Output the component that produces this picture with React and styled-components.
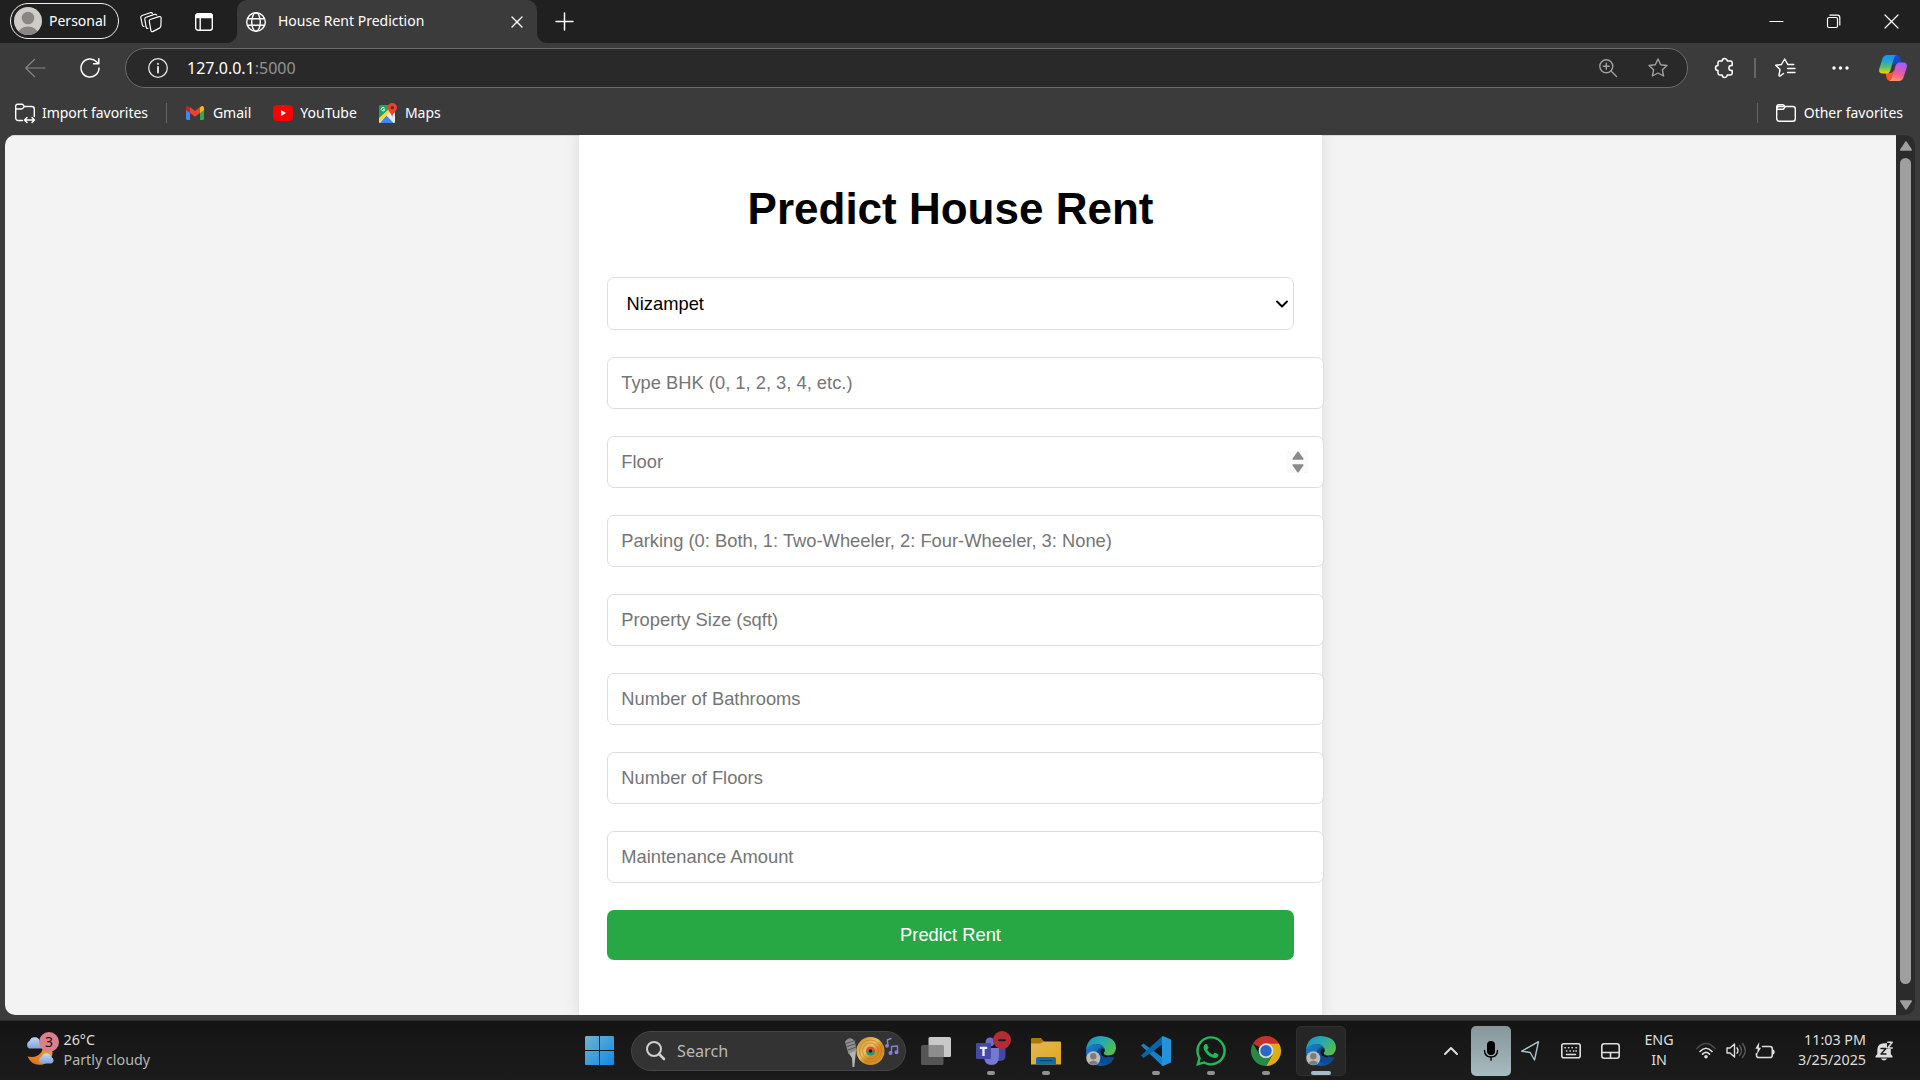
import React from "react";
import styled, { createGlobalStyle } from "styled-components";
import { FaWhatsapp } from "react-icons/fa";

const GlobalStyle = createGlobalStyle`
  *, *::before, *::after { box-sizing: border-box; }
  html, body { margin: 0; padding: 0; overflow: hidden; background: #3b3b3b; }
`;

const uiFont = `"Noto Sans", "Open Sans", sans-serif`;
const pageFont = `"Liberation Sans", Arial, sans-serif`;

/* ---------- shared ---------- */

const Screen = styled.div`
  width: 1920px;
  height: 1080px;
  display: flex;
  flex-direction: column;
  overflow: hidden;
  background: #3b3b3b;
  font-family: ${uiFont};
  color: #fff;
`;

const Svg = styled.svg`
  display: block;
  flex: none;
  overflow: visible;
  fill: none;
  stroke: ${(p) => p.$c || "#fff"};
  stroke-width: ${(p) => p.$w || 1.4};
  stroke-linecap: round;
  stroke-linejoin: round;
`;

const Icon = ({ w = 20, h, c, sw, children }) => (
  <Svg width={w} height={h || w} viewBox={`0 0 ${w} ${h || w}`} $c={c} $w={sw}>
    {children}
  </Svg>
);

const Slot = styled.div`
  flex: none;
  width: ${(p) => p.$w}px;
  padding-left: ${(p) => p.$pl || 0}px;
  padding-right: ${(p) => p.$pr || 0}px;
  display: flex;
  align-items: center;
  justify-content: center;
`;

const Label = styled.span`
  flex: none;
  white-space: nowrap;
  font-size: ${(p) => p.$size || 14}px;
  line-height: 20px;
  letter-spacing: ${(p) => p.$ls || 0}px;
  color: ${(p) => p.$c || "#fff"};
`;

const Grow = styled.div`
  flex: 1;
`;

const Divider = styled.div`
  flex: none;
  width: ${(p) => p.$w || 1}px;
  height: 20px;
  background: #666;
`;

/* ---------- tab strip ---------- */

const TabStrip = styled.div`
  flex: none;
  height: 43px;
  display: flex;
  align-items: stretch;
  background: #202020;
`;

const ProfilePill = styled.div`
  align-self: flex-start;
  display: flex;
  align-items: center;
  gap: 7px;
  width: 109px;
  height: 36px;
  margin: 3px 0 0 10px;
  padding-left: 3px;
  border: 1.5px solid #f0f0f0;
  border-radius: 18px;
`;

const Tab = styled.div`
  position: relative;
  width: 300px;
  margin-left: 12px;
  display: flex;
  align-items: center;
  padding: 0 15px 0 9px;
  background: #3b3b3b;
  border-radius: 10px 10px 0 0;
  &::before, &::after {
    content: "";
    position: absolute;
    bottom: 0;
    width: 10px;
    height: 10px;
  }
  &::before {
    left: -10px;
    background: radial-gradient(circle at 0 0, #202020 9.5px, #3b3b3b 10.5px);
  }
  &::after {
    right: -10px;
    background: radial-gradient(circle at 100% 0, #202020 9.5px, #3b3b3b 10.5px);
  }
`;

const TabTitle = styled(Label)`
  margin: 0 0 2px 12px;
`;

/* ---------- toolbar ---------- */

const Toolbar = styled.div`
  flex: none;
  height: 48px;
  display: flex;
  align-items: center;
  padding: 2px 0 0 7px;
`;

const AddressBar = styled.div`
  flex: none;
  display: flex;
  align-items: center;
  width: 1563px;
  height: 40px;
  margin-left: 8px;
  padding-left: 12px;
  background: #292929;
  border: 1px solid #6b6b6b;
  border-radius: 20px;
`;

const Url = styled(Label)`
  margin-left: 9px;
`;

const Favorites = styled.div`
  flex: none;
  height: 44px;
  display: flex;
  align-items: center;
  padding: 0 17px 0 15px;
`;

const Favorite = styled.div`
  display: flex;
  align-items: center;
  gap: ${(p) => p.$gap || 8}px;
  margin-left: ${(p) => p.$ml || 0}px;
`;

/* ---------- web page ---------- */

const Viewport = styled.div`
  flex: none;
  display: flex;
  width: 1910px;
  height: 880px;
  margin-left: 5px;
  border-radius: 10px;
  overflow: hidden;
  background: #2b2b2b;
`;

const Page = styled.div`
  width: 1891px;
  height: 880px;
  overflow: hidden;
  background: #f3f3f3;
  box-shadow: inset 0 1px 0 #dadada;
  font-family: ${pageFont};
`;

const Card = styled.main`
  width: 743px;
  height: 895px;
  margin: -8px 0 0 574px;
  padding: 27.5px 28px;
  background: #fff;
  border-radius: 11px;
  box-shadow: 0 0 16px rgba(0, 0, 0, 0.1);
`;

const Heading = styled.h1`
  margin: 29px 0 41.5px;
  height: 52px;
  line-height: 50px;
  font-size: 44px;
  font-weight: 700;
  color: #000;
  text-align: center;
`;

const Form = styled.form`
  display: flex;
  flex-direction: column;
  gap: 27px;
  font-size: 18.33px;
`;

const SelectBox = styled.label`
  display: flex;
  align-items: center;
  width: 687px;
  height: 53px;
  padding: 0 5px 0 18.5px;
  background: #fff;
  border: 1px solid #ddd;
  border-radius: 7px;
`;

const Select = styled.select`
  flex: 1;
  height: 30px;
  padding: 0;
  appearance: none;
  background: transparent;
  border: 0;
  font: inherit;
  color: #000;
`;

const Field = styled.label`
  display: flex;
  align-items: center;
  width: 717px;
  height: 52px;
  padding: 0 15px 0 13.25px;
  background: #fff;
  border: 1px solid #ddd;
  border-radius: 7px;
`;

const Input = styled.input`
  flex: 1;
  height: 26px;
  padding: 0;
  border: 0;
  outline: 0;
  background: transparent;
  font: inherit;
  &::placeholder { color: #757575; }
`;

const Stepper = styled.span`
  display: flex;
  align-items: center;
  justify-content: center;
  width: 21px;
  height: 22px;
  background: #fafafa;
`;

const Submit = styled.button`
  width: 687px;
  height: 50px;
  padding: 0;
  border: 0;
  border-radius: 7px;
  background: #28a745;
  font: inherit;
  color: #fff;
`;

const ScrollTrack = styled.div`
  width: 19px;
  display: flex;
  flex-direction: column;
  align-items: center;
  padding-top: 6px;
`;

const ScrollThumb = styled.div`
  flex: none;
  width: 11px;
  height: 826px;
  margin: 7px 0 16px;
  border-radius: 5.5px;
  background: #9f9f9f;
`;

/* ---------- taskbar ---------- */

const Taskbar = styled.div`
  flex: none;
  height: 60px;
  margin-top: 5px;
  display: flex;
  align-items: center;
  border-top: 1px solid #2c2c2c;
  background: linear-gradient(#151515, #1b1b1b);
`;

const Weather = styled.div`
  flex: none;
  display: flex;
  align-items: center;
  width: 585px;
  padding-left: 23.5px;
`;

const TextPair = styled.div`
  display: flex;
  flex-direction: column;
  align-items: ${(p) => p.$align || "flex-start"};
  margin-bottom: 2px;
`;

const SearchBox = styled.div`
  flex: none;
  display: flex;
  align-items: center;
  width: 275px;
  height: 40px;
  margin: 0 2.5px 0 17px;
  padding: 0 5px 0 14px;
  background: #333;
  border: 1px solid #454545;
  border-radius: 20px;
`;

const SearchLabel = styled(Label)`
  margin-left: 12px;
`;

const AppButton = styled.div`
  flex: none;
  display: flex;
  flex-direction: column;
  align-items: center;
  width: 50px;
  height: 50px;
  margin: 0 2.5px;
  padding-top: ${(p) => (p.$active ? 9 : 10)}px;
  gap: 5px;
  border-radius: 5px;
  ${(p) => p.$active && "background:#262626;border:1px solid #2f2f2f;"}
`;

const RunMark = styled.div`
  width: ${(p) => (p.$active ? 20 : 8)}px;
  height: 4px;
  border-radius: 2px;
  background: ${(p) => (p.$active ? "#a4bcc3" : "#929292")};
`;

const WhatsApp = styled(FaWhatsapp)`
  flex: none;
  margin: -2px;
  color: #20b858;
`;

const MicTile = styled.div`
  flex: none;
  display: flex;
  align-items: center;
  justify-content: center;
  width: 40px;
  height: 50px;
  border-radius: 5px;
  background: linear-gradient(#879699, #a7bbc0);
`;

const Clock = styled.div`
  flex: none;
  width: 84px;
  display: flex;
  flex-direction: column;
  align-items: flex-end;
  margin-bottom: 2px;
`;

/* ---------- drawings ---------- */

const Avatar = () => (
  <Icon w={28}>
    <defs>
      <clipPath id="av"><circle cx="14" cy="14" r="14" /></clipPath>
    </defs>
    <g clipPath="url(#av)" stroke="none">
      <rect width="28" height="28" fill="#cfccc8" />
      <circle cx="14" cy="11" r="6.3" fill="#8a8683" />
      <ellipse cx="14" cy="27" rx="10" ry="7.5" fill="#8a8683" />
    </g>
  </Icon>
);

const Workspaces = () => (
  <Icon w={22} h={20} sw={1.2}>
    <path d="M10.800 7.300 19 4.600q2-.5 2.100 1.400l-.2 7.500q0 1.800-1.500 2.600l-6.200 3.300q-1.900.9-2.300-1L9.300 9.400q-.2-1.500 1.500-2.100z" />
    <path d="M8 16.500q-1.500.1-1.900-1.500L4.800 7.400q-.2-1.500 1.300-2.100l8.400-2.900q1.400-.4 2.200.6" />
    <path d="M4 14.500q-1.300 0-1.700-1.500L.8 5.700q-.3-1.500 1.200-2.200L10.300.7q1.400-.4 2.200.6" />
  </Icon>
);

const TabActions = () => (
  <Icon w={18} sw={1.4}>
    <rect x=".7" y=".7" width="16.600" height="16.600" rx="2.500" />
    <path d="M.7 4.500V3.200A2.500 2.500 0 0 1 3.200.7h11.600a2.500 2.500 0 0 1 2.500 2.500v1.300z" fill="#fff" />
    <path d="M5.200 5v12" />
  </Icon>
);

const Globe = () => (
  <Icon w={20} sw={1.4}>
    <circle cx="10" cy="10" r="9.3" />
    <ellipse cx="10" cy="10" rx="4.3" ry="9.3" />
    <path d="M1.6 6.8h16.8M1.6 13.2h16.8" />
  </Icon>
);

const Cross = ({ s = 10, sw = 1.4 }) => (
  <Icon w={s} sw={sw}><path d={`M0 0 ${s} ${s}M${s} 0 0 ${s}`} /></Icon>
);

const Gmail = () => (
  <Icon w={18} h={14}>
    <g stroke="none">
      <path d="M0 2.5v10.2Q0 14 1.3 14H4V5z" fill="#4285f4" />
      <path d="M18 2.5v10.2q0 1.3-1.3 1.3H14V5z" fill="#34a853" />
      <path d="M14 1.2V7l4-3V2Q17.600-.8 15 .4z" fill="#fbbc04" />
      <path d="M4 1.2V7L0 4V2Q.4-.8 3 .4z" fill="#c5221f" />
      <path d="M4 1.100 9 5l5-3.900V7l-5 3.800L4 7z" fill="#ea4335" />
    </g>
  </Icon>
);

const YouTube = () => (
  <Icon w={20} h={16}>
    <rect width="20" height="16" rx="4" fill="#f00" stroke="none" />
    <path d="M8 5v6l5-3z" fill="#fff" stroke="none" />
  </Icon>
);

const MapsLogo = () => (
  <Icon w={18} h={20}>
    <g stroke="none">
      <rect x="0" y="2" width="16" height="18" rx="1.500" fill="#1fa463" />
      <path d="M0 18.500 12 6l4 4v8.500q0 1.500-1.500 1.500h-13Q0 20 0 18.500z" fill="#e8eaed" />
      <path d="M1 20 7.500 12.500 14.500 20z" fill="#4285f4" />
      <path d="m0 15 11-10 1.500 2.500L.3 19.400Q0 19 0 18.500z" fill="#fdd835" />
      <path d="M13.200 0A4.600 4.600 0 0 1 18 4.600c0 3.200-3.600 4.800-4.800 9.400C12 9.400 8.600 7.800 8.600 4.600A4.600 4.600 0 0 1 13.200 0z" fill="#ea4335" />
      <circle cx="13.300" cy="4.700" r="1.700" fill="#8c1d16" />
    </g>
    <path d="M5.300 5a1.700 1.700 0 1 0 .4 1.700H4.500" stroke="#fff" strokeWidth="1" />
  </Icon>
);

const Folder = ({ arrows }) => (
  <Icon w={20} h={18} sw={1.4}>
    {arrows ? (
      <>
        <path d="M7.500 16.500H3.200A2.500 2.500 0 0 1 .7 14V2.200Q.7.300 2.600.3h4Q8 .3 8.500 1.300L9.300 2.500h7.500a2.500 2.500 0 0 1 2.500 2.500v7.500M.7 5h5.500Q8 5 9.300 2.500" />
        <path d="M9.500 16h10M12 13.500 9.500 16l2.500 2.500M17 13.500l2.500 2.500-2.500 2.500" />
      </>
    ) : (
      <>
        <rect x=".7" y="2.500" width="18.600" height="14.700" rx="2.500" />
        <path d="M.7 5V3Q.7.700 3 .7h3.700q1 0 1.500.8L9 2.800 8 4.500q-.5.700-1.500.7H.8" />
      </>
    )}
  </Icon>
);

const starPath = "m10 1 2.700 5.700 6.300.8-4.600 4.300 1.200 6.200L10 15l-5.600 3 1.200-6.200L1 7.500l6.300-.8z";

const Copilot = () => (
  <Icon w={28} h={26}>
    <defs>
      <linearGradient id="cp1" x1="0" y1="0" x2="0" y2="1">
        <stop offset="0" stopColor="#1597e8" /><stop offset=".35" stopColor="#20a4d8" /><stop offset=".65" stopColor="#5bbf6a" /><stop offset="1" stopColor="#f5d20a" />
      </linearGradient>
      <linearGradient id="cp2" x1=".3" y1="0" x2="0" y2="1">
        <stop offset="0" stopColor="#a95cf0" /><stop offset=".5" stopColor="#ee5a9a" /><stop offset="1" stopColor="#ffa65a" />
      </linearGradient>
    </defs>
    <g stroke="none">
      <path d="M13 0h5q2.200 0 3 2.500L22.500 8h-4q-2.500 0-3.300 2.500L12 5z" fill="#1748c8" />
      <path d="M6.500 18h5q2.200 0 3-2.500l2 5-2.500 5.500h-2.500q-3 0-3.800-3z" fill="#f4582e" />
      <path d="M8.500 0H18q-2.200.2-3 3l-3.700 12.500q-.9 3-4 3H4q-5 0-3.700-5L3.500 3.500Q4.600 0 8.500 0z" fill="url(#cp1)" />
      <path d="M19.500 26H10q2.200-.2 3-3l3.700-12.500q.9-3 4-3H24q5 0 3.700 5l-3.200 10Q23.400 26 19.500 26z" fill="url(#cp2)" />
    </g>
  </Icon>
);

const WeatherIcon = () => (
  <Icon w={40} h={38}>
    <defs>
      <linearGradient id="cl" x1="0" y1="0" x2="0" y2="1"><stop offset="0" stopColor="#c3d8f5" /><stop offset="1" stopColor="#7fa3dc" /></linearGradient>
      <linearGradient id="mo" x1="0" y1="1" x2="1" y2="0"><stop offset="0" stopColor="#e06a1c" /><stop offset="1" stopColor="#f3a726" /></linearGradient>
    </defs>
    <g stroke="none">
      <path d="M3.500 24.500q9.500 2 14-4.500l3.500-8q7 3 7.500 8.500 0 8-8 11.500-12 3.500-17-7.500z" fill="url(#mo)" />
      <path d="M5 16.500a4.500 4.500 0 0 1 .6-7.800A5.500 5.500 0 0 1 16 9.500a4 4 0 0 1 1 7z" fill="url(#cl)" />
      <path d="M17 31.500a3.800 3.800 0 0 1 .5-6.800 5.200 5.200 0 0 1 9.800.2 3.600 3.600 0 0 1 .2 6.600z" fill="url(#cl)" />
      <circle cx="25" cy="10" r="10" fill="#d9808a" />
    </g>
    <text x="25" y="15" textAnchor="middle" fontSize="14" fill="#151515" stroke="none" fontFamily="Noto Sans">3</text>
  </Icon>
);

const StartLogo = () => (
  <Icon w={29}>
    <defs>
      <linearGradient id="win" gradientUnits="userSpaceOnUse" x1="0" y1="0" x2="29" y2="29"><stop offset="0" stopColor="#6fb4cc" /><stop offset="1" stopColor="#0f8ae8" /></linearGradient>
    </defs>
    <path d="M1 0h13v14H0V1zM15 0h13q1 0 1 1v13H15zM0 15h14v14H1q-1 0-1-1zM15 15h14v13q0 1-1 1H15z" fill="url(#win)" stroke="none" />
  </Icon>
);

const MusicArt = () => (
  <Icon w={56} h={34}>
    <defs>
      <linearGradient id="disc" x1="0" y1="0" x2="1" y2="1"><stop offset="0" stopColor="#c98a25" /><stop offset=".42" stopColor="#e8c163" /><stop offset=".6" stopColor="#d28a22" /><stop offset="1" stopColor="#d9992d" /></linearGradient>
    </defs>
    <g stroke="none">
      <path d="M1 8Q5 1.500 10.500 6.500l2.300 10L4.500 20z" fill="#8f8f8f" />
      <path d="m5 19.500 7-3-.7 7-1 9.500H8.500L8 24z" fill="#b5b5b5" />
      <circle cx="26.500" cy="17" r="14" fill="url(#disc)" />
      <path d="M22 17a4.500 4.500 0 0 1 9 0z" fill="#d9503c" />
      <path d="M22 17a4.500 4.500 0 0 0 9 0z" fill="#189a72" />
      <circle cx="26.500" cy="17" r="1.700" fill="#201a12" />
    </g>
    <path d="m2 9.500 9-3M3 12.500l9-3M4 16l8.500-3" stroke="#555" strokeWidth="1" />
    <circle cx="26.500" cy="17" r="8" stroke="#b9761c" strokeWidth=".6" />
    <circle cx="26.500" cy="17" r="11" stroke="#b9761c" strokeWidth=".6" />
    <g stroke="#8580d8" strokeWidth="1.400" fill="#8580d8">
      <path d="M44 11.500 43.300 6l3.700-1.500" fill="none" /><circle cx="43" cy="11.800" r="1.200" />
      <path d="M47.500 19v-6.500l6-.5v6" fill="none" /><circle cx="46.500" cy="19" r="1.300" /><circle cx="52.500" cy="18.200" r="1.300" />
    </g>
  </Icon>
);

const TaskView = () => (
  <Icon w={30}>
    <rect x="7.500" y="1" width="22.500" height="20" rx="1.500" fill="#c9c9c9" stroke="none" />
    <rect x="0" y="9" width="22.500" height="20" rx="1.500" fill="#555" stroke="none" />
    <rect x="7.500" y="9" width="15" height="12" fill="#8d8d8d" stroke="none" />
  </Icon>
);

const Teams = () => (
  <Icon w={30}>
    <g stroke="none">
      <circle cx="14" cy="6" r="4.500" fill="#6a70c8" />
      <path d="M22 12h7.500v7.500q0 5-5 5.500H21z" fill="#4348a5" />
      <path d="M9 12h14v8q0 9-7.500 9T8 20z" fill="#7479d2" />
      <rect x="0" y="7" width="15" height="16" rx="1" fill="#454aa8" />
      <path d="M3.800 10.800h7.400V13H8.700v7H6.300v-7H3.800z" fill="#eee" />
      <circle cx="26" cy="4" r="9" fill="#b52b33" />
      <rect x="22" y="3.200" width="8" height="2" rx="1" fill="#1b1b1b" />
    </g>
  </Icon>
);

const Explorer = () => (
  <Icon w={30}>
    <defs><linearGradient id="ex" x1="0" y1="0" x2="1" y2="1"><stop offset="0" stopColor="#e0b75a" /><stop offset="1" stopColor="#e5a815" /></linearGradient></defs>
    <g stroke="none">
      <path d="M0 3q0-1 1-1h9l3 3.500v4H0z" fill="#ab7706" />
      <path d="M0 7.500h9.500l3-2H29q1 0 1 1v22H0z" fill="url(#ex)" />
      <path d="M5 28.500V23q0-2 2-2h16q2 0 2 2v5.500z" fill="#0b6fb8" />
      <rect x="8.500" y="24" width="13" height="1.200" fill="#07456f" />
    </g>
  </Icon>
);

const Edge = ({ id }) => (
  <Icon w={30}>
    <defs>
      <linearGradient id={id + "a"} x1="0" y1="0" x2="1" y2=".6"><stop offset="0" stopColor="#1f8fc4" /><stop offset=".5" stopColor="#25a8b5" /><stop offset="1" stopColor="#55bd4a" /></linearGradient>
      <linearGradient id={id + "b"} x1="0" y1="0" x2="1" y2="1"><stop offset="0" stopColor="#1b80cc" /><stop offset="1" stopColor="#0b4a94" /></linearGradient>
    </defs>
    <g stroke="none">
      <path d="M0 15Q1.500 8 9 8q8 0 9.500 4.500-3 0-3.500 3.500 0 6 8 7.200 3 .2 5.300-1.200Q24 30 15 30 0 29 0 15z" fill={`url(#${id}b)`} />
      <path d="M10.500 18q.5-6 5.500-7l2 1.500q1 2-.5 4 0 3 3 3.800 4 1 8 1.200Q25 26.500 19.500 28 10.500 27 10.500 18z" fill="#0b4a94" />
      <path d="M16 12.500q3 .5 2.500 2.500-1.500 1.800-.8 3 1.300 1.700 4.800 2-1 1.500-2 1.500-6-1.500-6-5.500 0-2.500 1.500-3.500z" fill="#161616" />
      <path d="M0 14Q1.500 0 15 0 30 1 30 12q-.5 7.500-8 7.500-5-.3-4-3 1.500-1.700.5-4Q16.500 8 10.500 8 3 8 0 14z" fill={`url(#${id}a)`} />
      <circle cx="7.300" cy="22.300" r="7" fill="#bdbbb9" />
      <circle cx="7.300" cy="20.300" r="3.200" fill="#7e7c7a" />
      <path d="M2.500 27q4.800-5 9.600 0-4.800 4-9.600 0z" fill="#7e7c7a" />
    </g>
  </Icon>
);

const VSCode = () => (
  <Icon w={30}>
    <g stroke="none">
      <path d="M0 9.500 2.500 7.500 22 22v7.500L21.500 30z" fill="#1a7fc6" />
      <path d="M0 19.500 2.500 22 22 8V.5L21.500 0z" fill="#0866a8" />
      <path d="M22 0l8 3.500v23L22 30q-1.500-.5-1-2.500V2.500Q20.500.500 22 0z" fill="#2394dc" />
    </g>
  </Icon>
);

const Chrome = () => (
  <Icon w={30}>
    <g stroke="none">
      <path d="M15 15 2 7.500A15 15 0 0 1 28 7.500H15z" fill="#c5322a" />
      <path d="M15 7.500H28A15 15 0 0 1 15 30l6.500-11.200z" fill="#e2ab12" />
      <path d="M15 30A15 15 0 0 1 2 7.500l6.500 11.200 13 .1z" fill="#268a43" />
      <circle cx="15" cy="14.700" r="7.400" fill="#ddd" />
      <circle cx="15" cy="14.700" r="5.700" fill="#2967cc" />
    </g>
  </Icon>
);

const tray = "#dedede";

const fields = [
  "Type BHK (0, 1, 2, 3, 4, etc.)",
  "Floor",
  "Parking (0: Both, 1: Two-Wheeler, 2: Four-Wheeler, 3: None)",
  "Property Size (sqft)",
  "Number of Bathrooms",
  "Number of Floors",
  "Maintenance Amount",
];

const apps = [
  { name: "view", icon: <TaskView /> },
  { name: "teams", icon: <Teams />, run: true },
  { name: "files", icon: <Explorer />, run: true },
  { name: "edge", icon: <Edge id="e1" /> },
  { name: "code", icon: <VSCode />, run: true },
  { name: "whatsapp", icon: <WhatsApp size={34} />, run: true },
  { name: "chrome", icon: <Chrome />, run: true },
  { name: "edge2", icon: <Edge id="e2" />, run: true, active: true },
];

export default function App() {
  return (
    <Screen>
      <GlobalStyle />
      <TabStrip>
        <ProfilePill>
          <Avatar />
          <Label $size={14}>Personal</Label>
        </ProfilePill>
        <Slot $w={64}><Workspaces /></Slot>
        <Slot $w={42}><TabActions /></Slot>
        <Tab>
          <Globe />
          <TabTitle>House Rent Prediction</TabTitle>
          <Grow />
          <Cross />
        </Tab>
        <Slot $w={54}><Icon w={17} sw={1.5}><path d="M8.500 0v17M0 8.500h17" /></Icon></Slot>
        <Grow />
        <Slot $w={57}><Icon w={13} sw={1.2}><path d="M0 6.500h13" /></Icon></Slot>
        <Slot $w={57}>
          <Icon w={13} sw={1.2}>
            <rect x=".5" y="2.500" width="10" height="10" rx="1.500" />
            <path d="M3 .2h7.500Q12.800.2 12.800 2.500V10" />
          </Icon>
        </Slot>
        <Slot $w={58}><Cross s={13} sw={1.2} /></Slot>
      </TabStrip>

      <Toolbar>
        <Slot $w={56}>
          <Icon w={20} c="#858585" sw={1.2}><path d="M20 10H.7M9.500 1.500.7 10l8.800 8.500" /></Icon>
        </Slot>
        <Slot $w={54}>
          <Icon w={20} sw={1.500}><path d="M19 10A9 9 0 1 1 16.500 3.800L18.500 5.800M18.800.800V5.800h-5.300" /></Icon>
        </Slot>
        <AddressBar>
          <Slot $w={40}>
            <Icon w={20} sw={1.300} c="#e6e6e6"><circle cx="10" cy="10" r="9.300" /><path d="M10 9v5.500M10 5.800v.2" strokeWidth="1.900" /></Icon>
          </Slot>
          <Url $size={16}>127.0.0.1<Label $size={16} $c="#949494">:5000</Label></Url>
          <Grow />
          <Slot $w={50}>
            <Icon w={18} c="#a0a0a0"><circle cx="7.300" cy="7.300" r="6.500" /><path d="m12 12 5.500 5.500M7.300 4.300v6M4.300 7.300h6" /></Icon>
          </Slot>
          <Slot $w={50}><Icon w={20} c="#a0a0a0"><path d={starPath} /></Icon></Slot>
          <Slot $w={4} />
        </AddressBar>
        <Slot $w={66} $pl={8}>
          <Icon w={20} sw={1.500}>
            <path d="M4.500 3H7.200a2.500 2.500 0 0 1 5 0H15.500q1.700 0 1.700 1.700V7.500h-.8a2.500 2.500 0 0 0 0 5h.8v2.800q0 1.700-1.700 1.700H12.200a2.500 2.500 0 0 1-5 0H4.700Q3 17 3 15.300v-2.800a2.500 2.500 0 0 1 0-5V4.500Q3 3 4.500 3z" />
          </Icon>
        </Slot>
        <Divider $w={2} />
        <Slot $w={58}>
          <Icon w={20}>
            <path d="M5.500 17.800Q3.800 18.800 4 17l1-5.500L.7 7.300l5.700-.8L9.700 1l3 5.500h6M8.500 15.500l-3 2.300" />
            <path d="M12.500 10.500H20M12.500 14.500H20" />
          </Icon>
        </Slot>
        <Slot $w={52}><Icon w={17} h={4}><g fill="#fff" stroke="none"><circle cx="2" cy="2" r="1.700" /><circle cx="8.500" cy="2" r="1.700" /><circle cx="15" cy="2" r="1.700" /></g></Icon></Slot>
        <Slot $w={54}><Copilot /></Slot>
      </Toolbar>

      <Favorites>
        <Favorite $gap={7}><Folder arrows /><Label $ls={-0.05}>Import favorites</Label></Favorite>
        <Favorite $ml={18}><Divider /></Favorite>
        <Favorite $ml={19} $gap={9}><Gmail /><Label>Gmail</Label></Favorite>
        <Favorite $ml={22} $gap={7}><YouTube /><Label>YouTube</Label></Favorite>
        <Favorite $ml={22}><MapsLogo /><Label>Maps</Label></Favorite>
        <Grow />
        <Divider />
        <Favorite $ml={18}><Folder /><Label>Other favorites</Label></Favorite>
      </Favorites>

      <Viewport>
        <Page>
          <Card>
            <Heading>Predict House Rent</Heading>
            <Form>
              <SelectBox>
                <Select defaultValue="Nizampet"><option>Nizampet</option></Select>
                <Icon w={12} h={8} c="#000" sw={2}><path d="m1 1.500 5 5 5-5" /></Icon>
              </SelectBox>
              {fields.map((f) => (
                <Field key={f}>
                  <Input placeholder={f} />
                  {f === "Floor" && (
                    <Stepper>
                      <Icon w={12} h={22}>
                        <g fill="#8b8b8b" stroke="#8b8b8b" strokeWidth="1.600">
                          <path d="M6 1.300 10.800 8H1.200zM6 20.700 1.200 14h9.600z" />
                        </g>
                      </Icon>
                    </Stepper>
                  )}
                </Field>
              ))}
              <Submit type="button">Predict Rent</Submit>
            </Form>
          </Card>
        </Page>
        <ScrollTrack>
          <Icon w={12} h={10}><path d="M6 1 11.300 9H.7z" fill="#9f9f9f" stroke="#9f9f9f" strokeWidth="1.400" /></Icon>
          <ScrollThumb />
          <Icon w={12} h={10}><path d="M6 9 11.300 1H.7z" fill="#9f9f9f" stroke="#9f9f9f" strokeWidth="1.400" /></Icon>
        </ScrollTrack>
      </Viewport>

      <Taskbar>
        <Weather>
          <WeatherIcon />
          <TextPair>
            <Label $size={14.300} $c="#dcdcdc">26°C</Label>
            <Label $size={14.300} $c="#b5b5b5">Partly cloudy</Label>
          </TextPair>
        </Weather>
        <StartLogo />
        <SearchBox>
          <Icon w={19} c="#cfcfcf" sw={2}><circle cx="8" cy="8" r="7" /><path d="m13 13 5 5" strokeWidth="2.600" /></Icon>
          <SearchLabel $size={16.200} $c="#b9b9b9">Search</SearchLabel>
          <Grow />
          <MusicArt />
        </SearchBox>
        {apps.map((a) => (
          <AppButton key={a.name} $active={a.active}>
            {a.icon}
            {a.run && <RunMark $active={a.active} />}
          </AppButton>
        ))}
        <Grow />
        <Slot $w={40}><Icon w={14} h={8} c={tray} sw={2}><path d="M1 7l6-6 6 6" /></Icon></Slot>
        <MicTile>
          <Icon w={14} h={20} c="#000" sw={1.400}>
            <rect x="3" y="0" width="8" height="14" rx="4" fill="#000" stroke="none" />
            <path d="M.5 9.500q.3 6.500 6.500 6.500t6.500-6.500M7 16v3.300" />
          </Icon>
        </MicTile>
        <Slot $w={38}><Icon w={19} c="#a9c4cb"><path d="M17.500.7.700 10.200l8.500 1.300 4.300 7.500z" /></Icon></Slot>
        <Slot $w={44}>
          <Icon w={20} h={16} c={tray} sw={1.600}>
            <rect x=".8" y=".8" width="18.400" height="14" rx="2" />
            <path d="M4 4.700h.3M7.500 4.700h.3M11 4.700h.3M15 4.700h.3M5.500 8h.3M9 8h.3M12.500 8h.3M15 8h.3M5.500 11.500h9" />
          </Icon>
        </Slot>
        <Slot $w={36} $pr={2}>
          <Icon w={19} h={16} c={tray} sw={1.600}><rect x=".8" y=".8" width="17.400" height="14.400" rx="2.500" /><path d="M1 9.500h17M9.500 9.500v5.500" /></Icon>
        </Slot>
        <Slot $w={60}>
          <TextPair $align="center">
            <Label $size={14.300} $c={tray}>ENG</Label>
            <Label $size={14.300} $c={tray}>IN</Label>
          </TextPair>
        </Slot>
        <Slot $w={33}>
          <Icon w={20} h={17} c={tray} sw={1.700}>
            <path d="M1 6.500q9-10 18 0" stroke="#4a4a4a" />
            <path d="M4 9.500q6-6.500 12 0M6.500 12.200q3.500-3.500 7 0" />
            <circle cx="10" cy="14.700" r="1.800" fill={tray} stroke="none" />
          </Icon>
        </Slot>
        <Slot $w={28}>
          <Icon w={20} h={17} c={tray} sw={1.400}>
            <path d="M1 6v5h3l4.500 4V2L4 6z" /><path d="M11 5.800q2 2.700 0 5.400" />
            <path d="M13.500 3.500q4 5 0 10M16.500 1.500q5.500 7 0 14" stroke="#5a5a5a" />
          </Icon>
        </Slot>
        <Slot $w={32} $pr={2}>
          <Icon w={20} h={18} c={tray} sw={1.600}>
            <path d="M7.500 4.500H15q2.300 0 2.300 2.300v6.400q0 2.300-2.300 2.300H3.800Q1.500 15.500 1.500 13.200V11.500" />
            <path d="M17.500 7.800h1q1.200 0 1.200 2.200t-1.200 2.200h-1z" fill={tray} stroke="none" />
            <path d="M4.300 0 .3 6.800h2.400L2 12.500l4-6.800H3.800z" fill={tray} stroke="none" />
          </Icon>
        </Slot>
        <Clock>
          <Label $size={14.300} $c={tray}>11:03 PM</Label>
          <Label $size={14.300} $c={tray}>3/25/2025</Label>
        </Clock>
        <Slot $w={39} $pr={3}>
          <Icon w={18} h={20}>
            <path d="M.5 16.500v-1.300L2.300 13V8.500Q2.800 2.300 9 2.300h3V8h3.800v5l1.700 2.200v1.300z" fill={tray} stroke="none" />
            <path d="M5.800 17.500h6.400q-3.200 4-6.400 0z" fill={tray} stroke="none" />
            <path d="M6 7.500h5L6 13h5" stroke="#1a1a1a" strokeWidth="1.400" />
            <path d="M12.800 1.200h4.400L12.800 7h4.400" stroke={tray} strokeWidth="1.500" />
          </Icon>
        </Slot>
        <Slot $w={15} />
      </Taskbar>
    </Screen>
  );
}
